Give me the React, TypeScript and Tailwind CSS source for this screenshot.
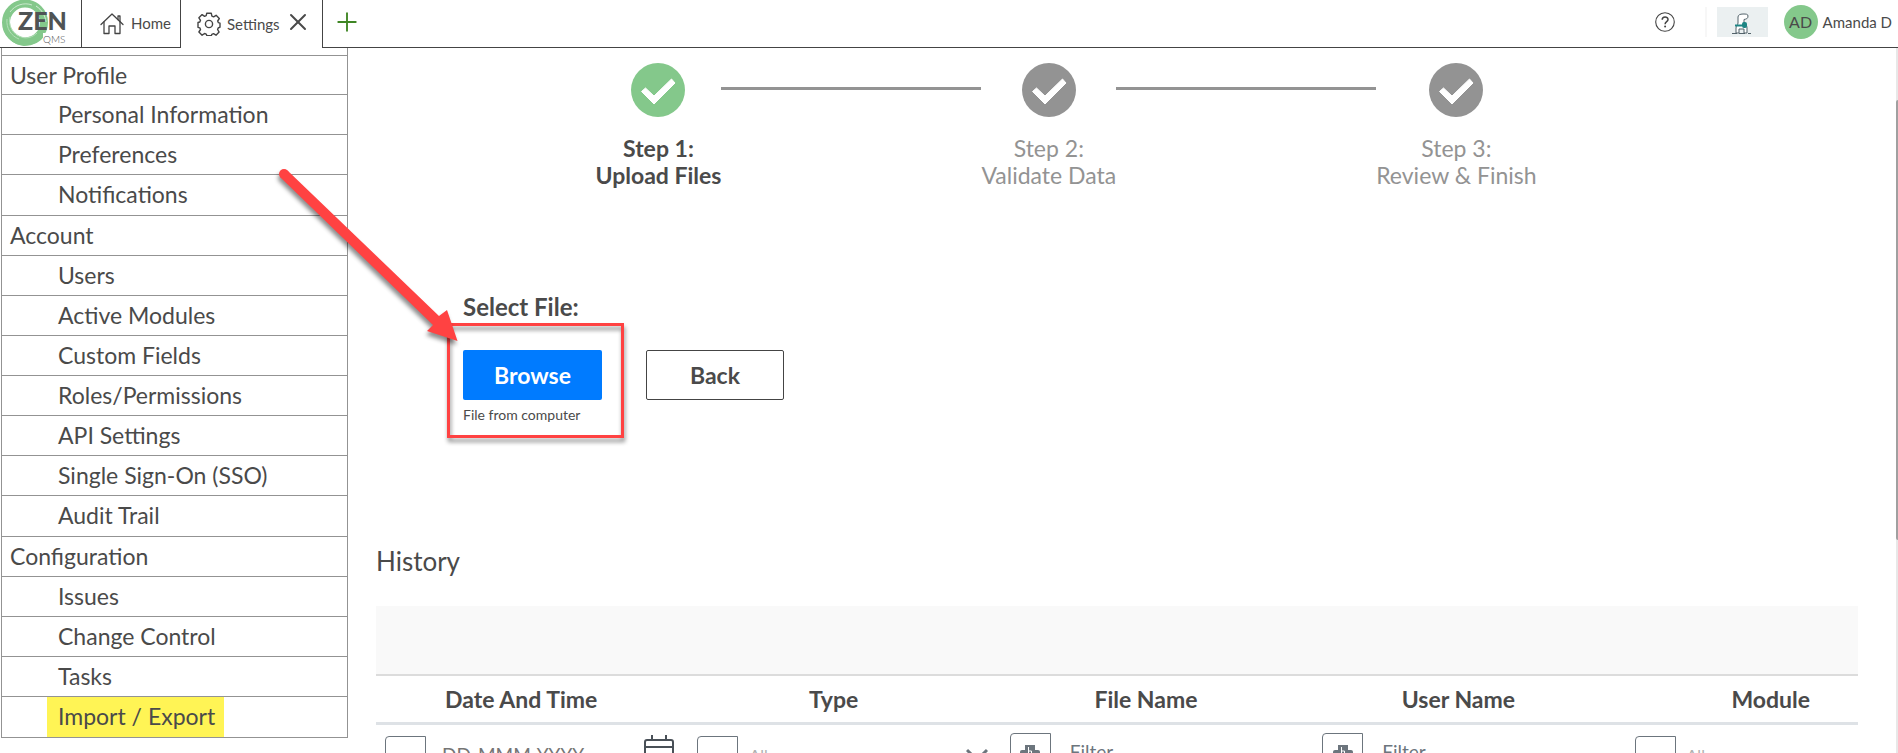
import React from "react";
import { Plus, X } from "lucide-react";

type NavGroup = {
  title: string;
  items: string[];
};

const navGroups: NavGroup[] = [
  {
    title: "User Profile",
    items: ["Personal Information", "Preferences", "Notifications"],
  },
  {
    title: "Account",
    items: [
      "Users",
      "Active Modules",
      "Custom Fields",
      "Roles/Permissions",
      "API Settings",
      "Single Sign-On (SSO)",
      "Audit Trail",
    ],
  },
  {
    title: "Configuration",
    items: ["Issues", "Change Control", "Tasks", "Import / Export"],
  },
];

const Logo = () => (
  <svg width="81" height="47" viewBox="0 0 81 47" aria-label="ZEN QMS">
    <circle cx="25" cy="22.500" r="19" fill="none" stroke="#84c88b" strokeWidth="8" />
    <path d="M4 28c3 9 10 16 20 17 9 0 16-4 20-10" fill="none" stroke="#84c88b" strokeWidth="2" />
    <path d="M10 12c5-7 14-10 22-7" fill="none" stroke="#c9e8cc" strokeWidth="1" />
    <path d="M7 19c-1 9 4 17 12 20" fill="none" stroke="#b4dfb9" strokeWidth="1" />
    <path d="M10 17c-2 8 2 15 9 19s14 1 18-3" fill="none" stroke="#b4dfb9" strokeWidth="1" />
    <path d="M36 6c6 4 9 9 10 16" fill="none" stroke="#d5edd8" strokeWidth="1" />
    <rect x="43" y="33" width="28" height="14" fill="#fff" />
    <text x="18" y="30" fontFamily="Lato, sans-serif" fontSize="25" fontWeight="900" fill="#4f5354">
      ZEN
    </text>
    <text x="43" y="43" fontFamily="Lato, sans-serif" fontSize="10" fontWeight="300" fill="#4f5354">
      QMS
    </text>
  </svg>
);

const HomeIcon = () => (
  <svg
    width="24"
    height="22"
    viewBox="0 0 24 22"
    fill="none"
    stroke="#444"
    strokeWidth="1.3"
    strokeLinejoin="round"
    strokeLinecap="round"
  >
    <path d="M1 11.5 12 1l11 10.500" />
    <path d="M18 6.500V3h2v5.500" />
    <path d="M4 9v11.500h5V13h6v7.500h5V9" />
  </svg>
);

const GearIcon = () => (
  <svg
    width="24"
    height="24"
    viewBox="0 0 24 24"
    fill="none"
    stroke="#444"
    strokeWidth="1.4"
    strokeLinejoin="round"
  >
    <path d="M9.700 1.300h4.600l.6 2.900 1.700.7 2.500-1.600 3.200 3.200-1.600 2.500.7 1.700 1.600.5v4l-1.800.8-.6 1.500 1.500 2.600-3.100 3.100-2.500-1.500-1.700.7-.5 1.400h-4.400l-.7-1.700-1.600-.6-2.500 1.700-3.200-3.200 1.600-2.500-.7-1.700-1.800-.5V10.500l1.800-.5.7-1.700-1.600-2.500 3.200-3.200 2.500 1.700 1.600-.6z" />
    <circle cx="12" cy="12" r="3.600" />
  </svg>
);

const HelpIcon = () => (
  <svg width="20" height="20" viewBox="0 0 20 20" fill="none" stroke="#444">
    <circle cx="10" cy="10" r="9.300" strokeWidth="1.100" />
    <path d="M7.200 7.800c0-3.700 5.800-3.600 5.800-.3 0 2.200-2.900 2.100-2.900 4.700" strokeWidth="1.500" />
    <circle cx="10.100" cy="14.500" r="1" fill="#444" stroke="none" />
  </svg>
);

const Mascot = () => (
  <svg width="51" height="30" viewBox="0 0 51 30">
    <rect width="51" height="30" fill="#ebf0f1" />
    <path
      d="M19 26v-5c0-2 2-3 2-5V10c0-2 2-3 5-3 3 0 5 0 5 2 0 3-2 3-4 3.500V16c2 1 3 3 3 5v5h-3v-4h-5v4z"
      fill="#fff"
      stroke="#53636b"
      strokeWidth="1"
    />
    <path d="M18 18.500h7" stroke="#1d8584" strokeWidth="2" />
    <rect x="25" y="15" width="5" height="6" rx="2" fill="#1d8584" />
    <path d="M15 26.500h5M22 26.500h6M31 26.500h3" stroke="#53636b" strokeWidth="1" />
  </svg>
);

const StepIcon = ({ active }: { active?: boolean }) => (
  <svg width="54" height="54" viewBox="0 0 54 54">
    <circle cx="27" cy="27" r="27" fill={active ? "#84c88b" : "#939393"} />
    <path
      d="M10.500 28.500 14.500 25 23 33 40.500 16 44 20 23 41z"
      fill="#fff"
      stroke="#fff"
      strokeWidth="1"
      strokeLinejoin="round"
    />
  </svg>
);

const Step = ({
  step,
  label,
  active,
}: {
  step: string;
  label: string;
  active?: boolean;
}) => (
  <li
    className={
      active
        ? "flex flex-col items-center font-bold"
        : "flex flex-col items-center text-[#939393]"
    }
  >
    <StepIcon active={active} />
    <p className="mt-[18px] text-center text-[23px] leading-[27px] whitespace-nowrap">
      {step}
      <br />
      {label}
    </p>
  </li>
);

const StepLine = () => (
  <li aria-hidden="true" className="mt-6 h-[3px] w-[260px] bg-[#939393]" />
);

const CalendarIcon = () => (
  <svg width="30" height="32" viewBox="0 0 30 32" fill="none" stroke="#495057" strokeWidth="2">
    <rect x="1" y="5" width="28" height="26" rx="2" />
    <path d="M1 12h28M8 0v5M22 0v5" />
  </svg>
);

const MatchIcon = () => (
  <svg width="20" height="16" viewBox="0 0 20 16">
    <rect x="0" y="6" width="20" height="8" rx="2" fill="#6c757d" />
    <rect x="5" y="1" width="10" height="15" fill="#6c757d" />
    <path d="M8.500 3v8h3V7h-3" fill="none" stroke="#fff" strokeWidth="1" />
  </svg>
);

const TextFilter = ({ label }: { label: string }) => (
  <div className="flex h-[38px]">
    <button
      aria-label={`${label} match mode`}
      className="flex w-[41px] items-center justify-center rounded-l-sm border border-[#6c757d]"
    >
      <MatchIcon />
    </button>
    <input
      aria-label={`Filter by ${label}`}
      placeholder="Filter"
      className="w-56 pl-[19px] text-[19px] leading-6 outline-none placeholder:text-[#6c757d]"
    />
  </div>
);

const SelectFilter = ({ label }: { label: string }) => (
  <div className="mt-[3px] flex h-[38px] items-center">
    <button
      aria-label={`${label} match mode`}
      className="h-full w-[41px] rounded-l-sm border border-[#6c757d]"
    />
    <select
      aria-label={`Filter by ${label}`}
      className="w-[228px] appearance-none pl-[11px] text-[16px] text-[#b0b0b0] outline-none"
    >
      <option>All</option>
    </select>
    <svg
      width="22"
      height="14"
      viewBox="0 0 22 14"
      fill="none"
      stroke="#6c757d"
      strokeWidth="3"
    >
      <path d="M1 2l10 10L21 2" />
    </svg>
  </div>
);

const DateFilter = () => (
  <div className="mt-[3px] flex h-[38px] items-center">
    <button
      aria-label="Date match mode"
      className="h-full w-[41px] rounded-l-sm border border-[#6c757d]"
    />
    <input
      aria-label="Filter by date"
      placeholder="DD-MMM-YYYY"
      className="w-[218px] pl-4 text-[19px] leading-6 outline-none placeholder:text-[#757575]"
    />
    <button aria-label="Open calendar" className="-mt-2">
      <CalendarIcon />
    </button>
  </div>
);

const columns = [
  { name: "Date And Time", filter: <DateFilter /> },
  { name: "Type", filter: <SelectFilter label="Type" /> },
  { name: "File Name", filter: <TextFilter label="File Name" /> },
  { name: "User Name", filter: <TextFilter label="User Name" /> },
  { name: "Module", filter: <SelectFilter label="Module" /> },
];

const TopBar = () => (
  <header className="flex h-12 shrink-0">
    <a href="#" className="w-[82px] shrink-0 border-r border-b border-[#444]">
      <Logo />
    </a>
    <a
      href="#"
      className="flex w-[99px] shrink-0 items-center gap-[7px] border-r border-b border-[#444] pl-[18px] text-[15px]"
    >
      <HomeIcon />
      Home
    </a>
    <div className="flex w-[142px] shrink-0 items-center border-r border-[#444] pl-4">
      <a href="#" className="flex items-center gap-[6px] text-[15px]">
        <GearIcon />
        Settings
      </a>
      <button aria-label="Close tab" className="mb-1 ml-1">
        <X size={28} strokeWidth={1.7} />
      </button>
    </div>
    <div className="flex flex-1 items-center border-b border-[#444] pb-[3px] pl-[9px]">
      <button aria-label="New tab">
        <Plus size={30} strokeWidth={1.5} className="text-[#3f8624]" />
      </button>
      <button aria-label="Help" className="ml-auto">
        <HelpIcon />
      </button>
      <div className="ml-[30px] h-[30px] w-0.5 bg-[#f7f7f7]" />
      <div className="ml-2.5">
        <Mascot />
      </div>
      <button className="ml-4 flex items-center gap-[5px] pr-[6px] text-[15px] whitespace-nowrap">
        <span className="flex size-[34px] items-center justify-center rounded-full bg-[#84c88b] text-[16px]">
          AD
        </span>
        Amanda D
      </button>
    </div>
  </header>
);

const Sidebar = () => (
  <nav className="ml-px w-[347px] shrink-0 self-start border-x border-b border-[#939393] pt-[7px] text-[23px] leading-[30px]">
    {navGroups.map((group) => (
      <div key={group.title} className="group">
        <h2 className="h-10 border-t border-[#939393] pt-1 pl-2 group-first:h-[39px]">
          {group.title}
        </h2>
        <ul>
          {group.items.map((item) => (
            <li
              key={item}
              className="h-10 border-t border-[#939393] pl-[45px] last:h-[41px]"
            >
              <a
                href="#"
                className={
                  item === "Import / Export"
                    ? "inline-block h-10 bg-[#fff455] pt-1 pr-[9px] pl-[11px]"
                    : "inline-block h-[39px] pt-1 pl-[11px]"
                }
              >
                {item}
              </a>
            </li>
          ))}
        </ul>
      </div>
    ))}
  </nav>
);

const Callout = () => (
  <>
    <div className="pointer-events-none absolute -top-[27px] -left-4 h-[115px] w-[177px] border-3 border-[#ff4242] drop-shadow-[1px_4px_2px_rgba(0,0,0,0.45)]" />
    <svg
      className="pointer-events-none absolute -top-[190px] -left-[193px] drop-shadow-[-1px_4px_2px_rgba(0,0,0,0.45)]"
      width="200"
      height="190"
      viewBox="0 0 200 190"
      fill="#ff4242"
    >
      <circle cx="14" cy="14" r="5" />
      <path d="M17.500 10.400 169 156l8-6 10.500 31L157 171l6-6L10.500 17.600z" />
    </svg>
  </>
);

const App = () => {
  return (
    <div className="flex h-screen flex-col overflow-hidden bg-white [font-family:Lato,sans-serif] text-[#4a4a4a]">
      <TopBar />
      <div className="flex min-h-0 flex-1">
        <Sidebar />
        <main className="min-w-0 flex-1 pr-[38px] pl-7">
          <ol className="flex justify-center pt-[15px] pr-[102px]">
            <Step step="Step 1:" label="Upload Files" active />
            <StepLine />
            <Step step="Step 2:" label="Validate Data" />
            <StepLine />
            <Step step="Step 3:" label="Review & Finish" />
          </ol>

          <section className="mt-[102px] pl-[87px]">
            <h3 className="text-[24px] leading-8 font-bold">Select File:</h3>
            <div className="mt-[27px] flex items-start gap-11">
              <div className="relative">
                <button className="block h-[50px] w-[139px] rounded-xs bg-[#007bff] text-[23px] font-bold text-white">
                  Browse
                </button>
                <p className="mt-[5px] text-[14px] leading-5">
                  File from computer
                </p>
                <Callout />
              </div>
              <button className="h-[50px] w-[138px] rounded-xs border border-[#444] text-[23px] font-bold">
                Back
              </button>
            </div>
          </section>

          <section className="mt-[120px]">
            <h3 className="text-[26px] leading-8">History</h3>
            <div className="mt-[29px] h-[68px] bg-[#f9f9f9]" />
            <div className="overflow-hidden">
              <table className="w-full min-w-[1562px] table-fixed border-collapse">
                <thead>
                  <tr className="h-12 border-t-2 border-b-3 border-t-[#dcdcdc] border-b-[#dee2e6]">
                    {columns.map((column) => (
                      <th
                        key={column.name}
                        scope="col"
                        className="pr-[22px] text-[23px] leading-8 font-bold"
                      >
                        {column.name}
                      </th>
                    ))}
                  </tr>
                </thead>
                <tbody>
                  <tr>
                    {columns.map((column) => (
                      <td key={column.name} className="pt-2 pl-[9px] align-top">
                        {column.filter}
                      </td>
                    ))}
                  </tr>
                </tbody>
              </table>
            </div>
          </section>
        </main>
        <div className="w-0.5 shrink-0 bg-[#e8e8e8] pt-[52px]">
          <div className="h-[440px] rounded-l-sm bg-[#a0a0a0]" />
        </div>
      </div>
    </div>
  );
};

export default App;
